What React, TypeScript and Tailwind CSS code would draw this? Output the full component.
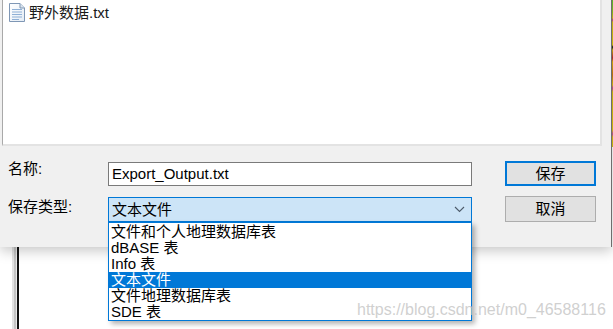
import React from 'react'

const FONT = '"Liberation Sans", "Noto Sans CJK SC", sans-serif'

const FILE_TYPES = ['文件和个人地理数据库表', 'dBASE 表', 'Info 表', '文本文件', '文件地理数据库表', 'SDE 表']
const SELECTED = '文本文件'

const TextFileIcon: React.FC = () => (
  <svg width="16" height="19" viewBox="0 0 16 19" className="shrink-0">
    <defs>
      <linearGradient id="pg" x1="0" y1="0" x2="1" y2="1">
        <stop offset="0" stopColor="#ffffff" />
        <stop offset="1" stopColor="#e4ecf5" />
      </linearGradient>
    </defs>
    <path d="M0.5 0.5 H11 L15.5 5 V18.5 H0.5 Z" fill="url(#pg)" stroke="#7f97b5" />
    <path d="M11 0.5 V5 H15.5" fill="#dbe4ee" stroke="#7f97b5" />
    <g stroke="#8fb0d6" strokeWidth="1">
      <line x1="3" y1="6.5" x2="13" y2="6.5" />
      <line x1="3" y1="9" x2="13" y2="9" />
      <line x1="3" y1="11.5" x2="13" y2="11.5" />
      <line x1="3" y1="14" x2="13" y2="14" />
      <line x1="3" y1="16.5" x2="10" y2="16.5" />
    </g>
  </svg>
)

const Chevron: React.FC = () => (
  <svg width="11" height="7" viewBox="0 0 11 7">
    <path d="M1 1 L5.5 5.5 L10 1" fill="none" stroke="#4d5b6a" strokeWidth="1.1" />
  </svg>
)

export default function App() {
  return (
    <div
      className="relative w-[613px] h-[329px] overflow-hidden bg-white flex flex-col"
      style={{ fontFamily: FONT }}
    >
      {/* top: dialog + sliver of the window behind it */}
      <div className="flex shrink-0">
        <div className="relative z-10 w-[612px] h-[247px] bg-[#f0f0f0] border-r border-[#6e6e6e] shadow-[0_4px_12px_rgba(0,0,0,0.22)] flex flex-col">
          {/* file list */}
          <div className="ml-[2px] w-[600px] h-[146px] bg-white border-l border-[#a9a9a9] border-r-2 border-b-2 border-r-[#e3e3e3] border-b-[#e3e3e3] pt-[3px] pl-[6px]">
            <div className="flex items-center gap-[4px] h-[19px]">
              <TextFileIcon />
              <span className="text-[15px] leading-[19px] text-[#1a1a1a]">野外数据.txt</span>
            </div>
          </div>

          {/* form */}
          <div className="pl-[8px] pt-[15px] text-[15px] text-black">
            <div className="flex items-start h-[25px]">
              <span className="w-[100px] leading-[16px] pt-[0px]">名称:</span>
              <div className="mt-[1px] w-[364px] h-[24px] bg-white border border-[#7a7a7a] pl-[3px] leading-[22px]">
                Export_Output.txt
              </div>
              <button className="ml-[33px] w-[91px] h-[25px] bg-[#e1e1e1] border-2 border-[#0078d7] leading-[20px]">
                保存
              </button>
            </div>
            <div className="flex items-start h-[26px] mt-[10px]">
              <span className="w-[100px] leading-[21px]">保存类型:</span>
              <div className="mt-[1px] w-[364px] h-[25px] bg-[#cce4f7] border border-[#0078d7] pl-[3px] pr-[6px] flex items-center justify-between">
                <span className="leading-[22px]">文本文件</span>
                <Chevron />
              </div>
              <button className="ml-[33px] w-[91px] h-[26px] bg-[#e1e1e1] border border-[#adadad] leading-[22px]">
                取消
              </button>
            </div>
          </div>
        </div>
        <div className="w-[1px] flex flex-col">
          <div className="h-[147px] bg-[linear-gradient(to_bottom,#5cb82e_0px,#8fc41f_12px,#d9c312_18px,#c83a9a_20px,#d8c414_22px,#e0c70f_45px,#111_47px,#d6b60c_50px,#c02a2a_58px,#e4b30c_62px,#d07b12_75px,#e0bf10_85px,#c93fa0_88px,#d9c110_92px,#e3c70e_130px,#c64aa8_134px,#dec10f_137px,#d9c510_147px)]" />
        </div>
      </div>

      {/* window behind the dialog */}
      <div className="flex flex-1">
        <div className="w-[12px] bg-white" />
        <div className="w-[2px] bg-[#e2e2e2]" />
        <div className="w-[2px] bg-[#c4c4c4]" />
        <div className="w-[1px] bg-[#e9e9e9]" />
        <div className="w-[2px] bg-[#111]" />
        <div className="flex-1 bg-white" />
      </div>

      {/* open dropdown list */}
      <div className="absolute z-20 left-[108px] top-[222px] w-[364px] h-[99px] bg-white border border-[#0078d7] py-[1px] shadow-[3px_3px_5px_rgba(0,0,0,0.3)]">
        {FILE_TYPES.map((t) => (
          <div
            key={t}
            className={
              t === SELECTED
                ? 'h-[16px] leading-[16px] pl-[2px] text-[15px] bg-[#0078d7] text-white'
                : 'h-[16px] leading-[16px] pl-[2px] text-[15px] text-black'
            }
          >
            {t}
          </div>
        ))}
      </div>

      {/* watermark */}
      <div className="absolute z-30 left-[357px] top-[301px] text-[16px] leading-[18px] text-[#c4c4c4]/80">
        https://blog.csdn.net/m0_46588116
      </div>
    </div>
  )
}
